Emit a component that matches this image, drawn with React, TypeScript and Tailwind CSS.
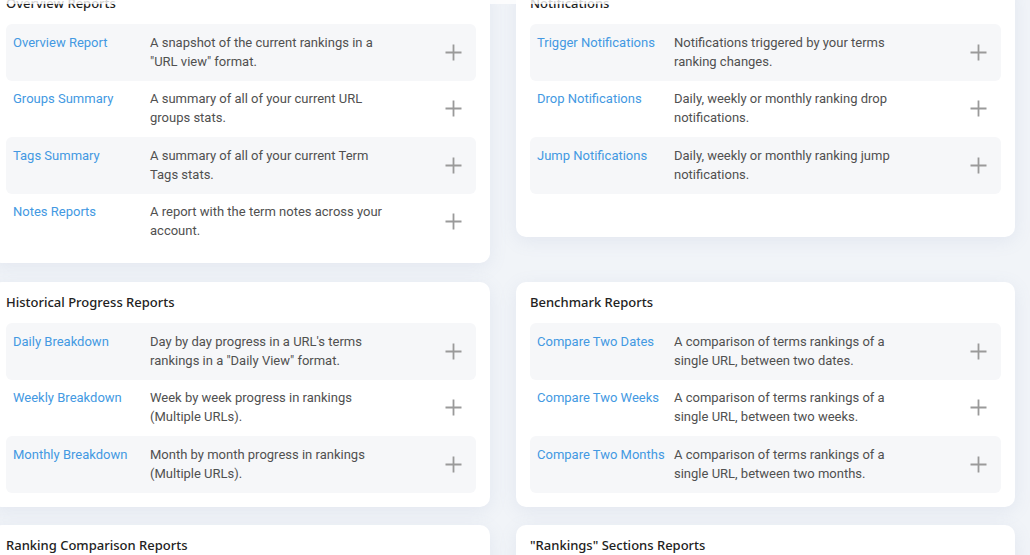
import { Fragment } from "react";

interface Item {
  title: string;
  desc: string;
}

interface Section {
  title: string;
  items: Item[];
  extra?: string;
}

const sections: Section[] = [
  {
    title: "Overview Reports",
    extra: "pb-[13px]",
    items: [
      { title: "Overview Report", desc: 'A snapshot of the current rankings in a "URL view" format.' },
      { title: "Groups Summary", desc: "A summary of all of your current URL groups stats." },
      { title: "Tags Summary", desc: "A summary of all of your current Term Tags stats." },
      { title: "Notes Reports", desc: "A report with the term notes across your account." },
    ],
  },
  {
    title: "Notifications",
    extra: "h-[254px]",
    items: [
      { title: "Trigger Notifications", desc: "Notifications triggered by your terms ranking changes." },
      { title: "Drop Notifications", desc: "Daily, weekly or monthly ranking drop notifications." },
      { title: "Jump Notifications", desc: "Daily, weekly or monthly ranking jump notifications." },
    ],
  },
  {
    title: "Historical Progress Reports",
    extra: "pb-[14.5px]",
    items: [
      { title: "Daily Breakdown", desc: 'Day by day progress in a URL\'s terms rankings in a "Daily View" format.' },
      { title: "Weekly Breakdown", desc: "Week by week progress in rankings (Multiple URLs)." },
      { title: "Monthly Breakdown", desc: "Month by month progress in rankings (Multiple URLs)." },
    ],
  },
  {
    title: "Benchmark Reports",
    extra: "pb-[14.5px]",
    items: [
      { title: "Compare Two Dates", desc: "A comparison of terms rankings of a single URL, between two dates." },
      { title: "Compare Two Weeks", desc: "A comparison of terms rankings of a single URL, between two weeks." },
      { title: "Compare Two Months", desc: "A comparison of terms rankings of a single URL, between two months." },
    ],
  },
  { title: "Ranking Comparison Reports", items: [] },
  { title: '"Rankings" Sections Reports', items: [] },
];

function Plus() {
  return (
    <svg width="17" height="17" viewBox="0 0 17 17" className="shrink-0">
      <path d="M8.5 0.5v16M0.5 8.5h16" stroke="#9a9a9a" strokeWidth="1.8" />
    </svg>
  );
}

function ReportCard({ section }: { section: Section }) {
  return (
    <div
      className={`bg-white rounded-[10px] shadow-[0_4px_18px_rgba(120,140,180,0.12)] px-[14px] pt-[12px] ${
        section.extra ?? "pb-[14px]"
      }`}>
      <h2
        className="text-[13px] leading-[16px] font-medium text-[#222] mb-[13px]"
        style={{ fontFamily: '"Noto Sans", "Open Sans", sans-serif' }}>
        {section.title}
      </h2>
      <div className="flex flex-col">
        {section.items.map((it, i) => (
          <div
            key={it.title}
            className={`flex items-start rounded-[6px] h-[56.5px] pl-[7px] pr-[14px] py-[8.5px] ${
              i % 2 === 0 ? "bg-[#f6f7f9]" : "bg-white"
            }`}>
            <span className="w-[137px] shrink-0 text-[13px] leading-[19px] text-[#4399e2]">
              {it.title}
            </span>
            <p className="w-[240px] text-[13px] leading-[19px] text-[#505050]">{it.desc}</p>
            <div className="ml-auto self-center">
              <Plus />
            </div>
          </div>
        ))}
      </div>
    </div>
  );
}

export default function App() {
  return (
    <div
      className="relative w-[1030px] h-[555px] overflow-hidden bg-[#f1f4f8]"
      style={{ fontFamily: "Roboto, 'Liberation Sans', sans-serif" }}>
      <div className="ml-[-8px] mt-[-17px] grid grid-cols-[498px_499px] gap-x-[26px] items-start">
        {sections.map((s, i) => (
          <Fragment key={s.title}>
            <div className={i < 2 ? "mb-[19px]" : "mb-[18px]"}>
              <ReportCard section={s} />
            </div>
          </Fragment>
        ))}
      </div>
      <div className="absolute top-0 left-0 w-[1008px] h-[4px] bg-white/80" />
    </div>
  );
}
